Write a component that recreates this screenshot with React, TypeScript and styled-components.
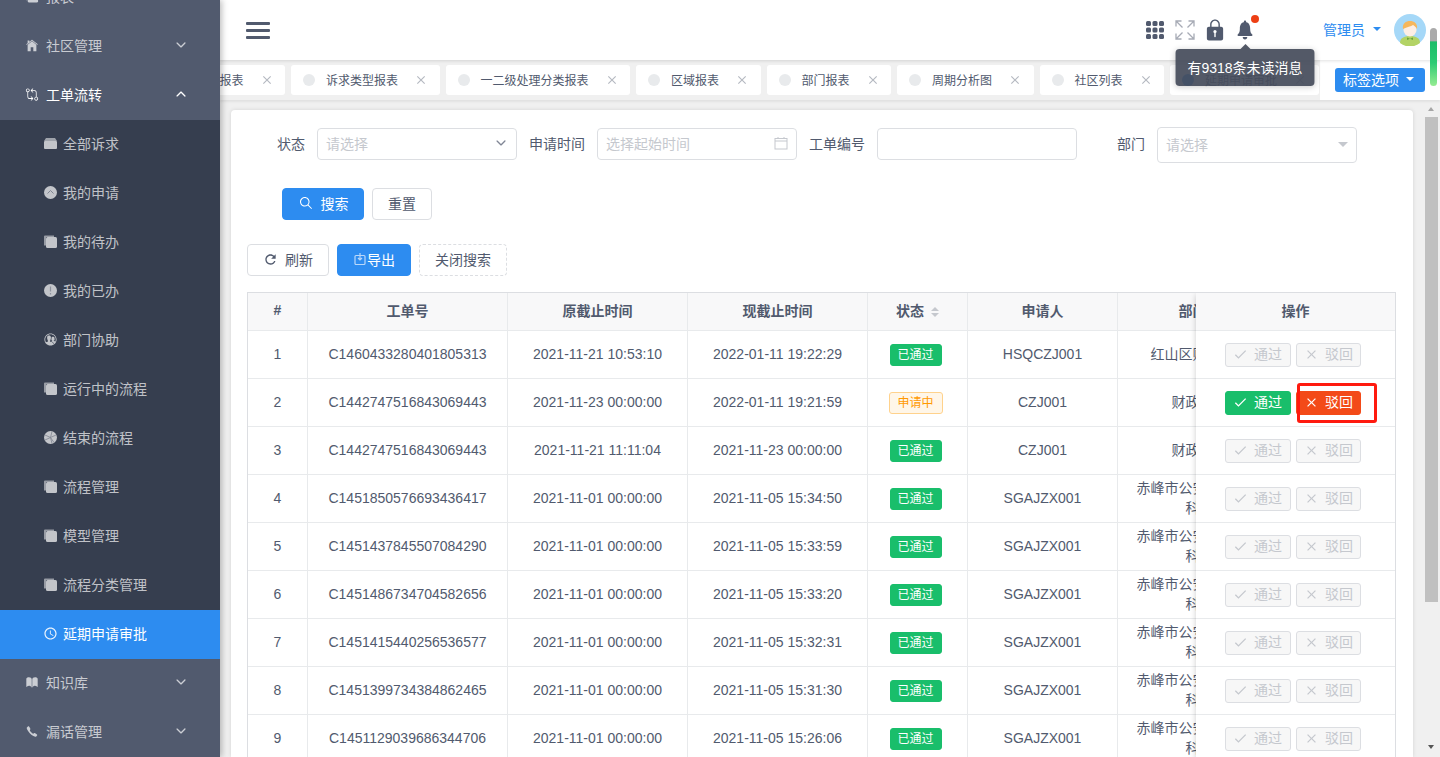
import React from 'react';
import styled, { createGlobalStyle } from 'styled-components';
import {
  IoIosArrowDown,
  IoIosArrowUp,
  IoIosBook,
  IoIosCall,
  IoIosContacts,
  IoIosGitCompare,
  IoIosHome,
  IoIosLock,
  IoIosNotifications,
  IoIosSearch,
  IoMdCheckmark,
  IoMdClose,
  IoMdRefresh,
  IoMdTime,
} from 'react-icons/io';

const GlobalStyle = createGlobalStyle`
  html, body {
    margin: 0;
    height: 100%;
    overflow: hidden;
  }
  body {
    font-family: "Liberation Sans", "Noto Sans CJK SC", sans-serif;
    font-size: 14px;
    color: #515a6e;
  }
  * {
    box-sizing: border-box;
  }
`;

const Shell = styled.div`
  display: flex;
  width: 100%;
  height: 100vh;
  overflow: hidden;
  position: relative;
`;

const Sidebar = styled.aside`
  flex: 0 0 220px;
  height: 100%;
  overflow: hidden;
  background: #515a6e;
  box-shadow: 2px 0 6px rgba(0, 0, 0, 0.25);
  position: relative;
  z-index: 3;
`;

// menu is scrolled a little, the first row sits above the window
const Menu = styled.div`
  margin-top: -27px;
`;

const MenuRow = styled.div<{ $open?: boolean }>`
  display: flex;
  align-items: center;
  height: 49px;
  padding: 0 32px 3px 25px;
  color: ${(p) => (p.$open ? '#fff' : 'rgba(255, 255, 255, 0.7)')};

  svg:first-child {
    flex: 0 0 14px;
    margin-right: 7px;
    font-size: 15px;
  }
  span {
    flex: 1;
  }
`;

const SubMenu = styled.div`
  background: #363e4f;
`;

const SubRow = styled.div<{ $active?: boolean }>`
  display: flex;
  align-items: center;
  height: 49px;
  padding: 0 0 3px 43px;
  color: ${(p) => (p.$active ? '#fff' : 'rgba(255, 255, 255, 0.7)')};
  background: ${(p) => (p.$active ? '#2d8cf0' : 'transparent')};

  svg {
    flex: 0 0 15px;
    margin-right: 5px;
    font-size: 15px;
  }
`;

const Main = styled.div`
  flex: 1;
  min-width: 0;
  display: flex;
  flex-direction: column;
  background: #f0f0f0;
`;

const Header = styled.header`
  flex: 0 0 60px;
  display: flex;
  align-items: center;
  justify-content: space-between;
  padding: 0 14px 0 26px;
  background: #fff;
  box-shadow: 0 1px 3px rgba(0, 0, 0, 0.12);
  position: relative;
  z-index: 2;
`;

const Hamburger = styled.div`
  display: flex;
  flex-direction: column;
  gap: 4px;
  width: 24px;

  i {
    display: block;
    height: 3px;
    border-radius: 1px;
    background: #515a6e;
  }
`;

const HeaderRight = styled.div`
  display: flex;
  align-items: center;
`;

const IconSlot = styled.div<{ $size?: number }>`
  position: relative;
  display: flex;
  align-items: center;
  justify-content: center;
  width: 30px;
  height: 30px;
  color: #515a6e;
  font-size: ${(p) => p.$size || 24}px;
`;

const RedDot = styled.i`
  position: absolute;
  top: 0;
  right: 1px;
  width: 8px;
  height: 8px;
  border-radius: 50%;
  background: #ed3f14;
`;

const Tooltip = styled.div`
  position: absolute;
  top: 34px;
  left: 50%;
  transform: translateX(-50%);
  width: 139px;
  height: 37px;
  display: flex;
  align-items: center;
  justify-content: center;
  padding-bottom: 1px;
  border-radius: 4px;
  background: rgba(70, 76, 91, 0.93);
  color: #fff;
  font-size: 14px;
  white-space: nowrap;
  box-shadow: 0 1px 6px rgba(0, 0, 0, 0.2);

  &::before {
    content: '';
    position: absolute;
    top: -5px;
    left: 50%;
    margin-left: -5px;
    border-style: solid;
    border-width: 0 5px 5px;
    border-color: transparent transparent rgba(70, 76, 91, 0.93);
  }
`;

const UserName = styled.div`
  display: flex;
  align-items: center;
  gap: 8px;
  margin-left: 63px;
  padding-bottom: 2px;
  color: #2d8cf0;
`;

const Caret = styled.i<{ $color: string; $size?: number }>`
  display: inline-block;
  border-style: solid;
  border-width: ${(p) => p.$size || 4}px ${(p) => p.$size || 4}px 0;
  border-color: ${(p) => p.$color} transparent transparent;
`;

const AvatarWrap = styled.div`
  margin-left: 13px;
  width: 32px;
  height: 32px;
  svg {
    display: block;
  }
`;

const ScrollBadge = styled.div`
  position: absolute;
  top: 28px;
  right: 3px;
  width: 7px;
  height: 58px;
  border-radius: 4px;
  background: linear-gradient(#aaa 0, #aaa 22%, #1dbd69 24%, #2ccb74 60%, #96ec92 100%);
  z-index: 4;
`;

const TabBar = styled.div`
  flex: 0 0 40px;
  display: flex;
  box-shadow: 0 2px 2px rgba(0, 0, 0, 0.06);
  position: relative;
  z-index: 1;
`;

const TabScroller = styled.div`
  flex: 1;
  min-width: 0;
  overflow: hidden;
  padding-top: 5px;
`;

// scrolled sideways, so the first tab is cut by the sidebar
const TabList = styled.div`
  display: flex;
  gap: 6px;
  margin-left: -59.5px;
  width: max-content;
`;

const Tab = styled.div`
  display: flex;
  align-items: center;
  height: 30px;
  padding: 0 11.5px 1px 12px;
  background: #fff;
  border-radius: 3px;
  font-size: 12px;
  white-space: nowrap;

  svg {
    margin-left: 16px;
    font-size: 14px;
    color: #b5b9c1;
  }
`;

const TabDot = styled.i<{ $active?: boolean }>`
  width: 12px;
  height: 12px;
  margin-right: 11px;
  border-radius: 50%;
  background: ${(p) => (p.$active ? '#2d8cf0' : '#e8eaec')};
`;

const TabOptions = styled.div`
  flex: 0 0 120px;
  display: flex;
  align-items: center;
  padding-left: 15px;
  background: #fff;
`;

const OptionsButton = styled.div`
  display: flex;
  align-items: center;
  gap: 7px;
  width: 90px;
  height: 24px;
  padding: 0 0 2px 8px;
  border-radius: 3px;
  background: #2d8cf0;
  color: #fff;
`;

const Body = styled.div`
  flex: 1;
  min-height: 0;
  display: flex;
  padding-left: 11px;
`;

const Card = styled.main`
  flex: 1;
  min-width: 0;
  margin: 10px 12px 0 0;
  padding: 17px 17px 0 16px;
  background: #fff;
  border-radius: 4px 4px 0 0;
  box-shadow: 0 0 4px rgba(0, 0, 0, 0.12);
  overflow: hidden;
`;

const ScrollTrack = styled.div`
  flex: 0 0 15px;
  display: flex;
  flex-direction: column;
  align-items: flex-start;
  background: #f0f0f0;
`;

const ScrollArrow = styled.i<{ $down?: boolean }>`
  width: 0;
  height: 0;
  margin: ${(p) => (p.$down ? '143px' : '7px')} 0 0 3px;
  border-style: solid;
  border-width: ${(p) => (p.$down ? '4px 3.5px 0' : '0 3.5px 4px')};
  border-color: ${(p) =>
    p.$down ? '#555 transparent transparent' : 'transparent transparent #a6a6a6'};
`;

const ScrollThumb = styled.div`
  width: 13px;
  height: 485px;
  margin-top: 6px;
  background: #c0c0c0;
`;

const FormRow = styled.div`
  display: grid;
  grid-template-columns: repeat(4, 280px);
`;

const Field = styled.div`
  display: flex;
  align-items: flex-start;
`;

const FieldLabel = styled.label`
  flex: 0 0 58px;
  height: 36px;
  line-height: 34px;
  margin-right: 12px;
  text-align: right;
  white-space: nowrap;
`;

const Control = styled.div<{ $tall?: boolean }>`
  display: flex;
  align-items: center;
  justify-content: space-between;
  width: 200px;
  height: ${(p) => (p.$tall ? 36 : 32)}px;
  margin-top: ${(p) => (p.$tall ? 0 : 1)}px;
  padding: 0 8px 2px 8px;
  border: 1px solid #dcdee2;
  border-radius: 4px;
  color: #c5c8ce;
  background: #fff;
`;

const SearchRow = styled.div`
  display: flex;
  gap: 8px;
  margin: 25px 0 0 35px;
`;

const Button = styled.button<{ $kind?: 'primary' | 'dashed'; $width: number }>`
  display: inline-flex;
  align-items: center;
  justify-content: center;
  width: ${(p) => p.$width}px;
  height: 32px;
  padding: 0 0 2px;
  border-radius: 4px;
  border: 1px ${(p) => (p.$kind === 'dashed' ? 'dashed' : 'solid')}
    ${(p) => (p.$kind === 'primary' ? '#2d8cf0' : '#dcdee2')};
  background: ${(p) => (p.$kind === 'primary' ? '#2d8cf0' : '#fff')};
  color: ${(p) => (p.$kind === 'primary' ? '#fff' : '#515a6e')};
  font: inherit;
`;

const BtnIcon = styled.span<{ $gap: number }>`
  display: inline-flex;
  margin-right: ${(p) => p.$gap}px;
  font-size: 14px;
`;

const Toolbar = styled.div`
  display: flex;
  gap: 8px;
  margin-top: 24px;
`;

const TableWrap = styled.div`
  position: relative;
  margin-top: 16px;
  border: 1px solid #dcdee2;
  border-width: 1px 1px 0;
  overflow: hidden;
`;

const Table = styled.table`
  width: 100%;
  table-layout: fixed;
  border-collapse: separate;
  border-spacing: 0;
`;

const Th = styled.th`
  height: 38px;
  padding: 0 0 3px;
  background: #f8f8f9;
  border-right: 1px solid #e8eaec;
  border-bottom: 1px solid #e8eaec;
  font-weight: 700;
  color: #515a6e;
  text-align: center;
`;

const Td = styled.td`
  height: 48px;
  padding: 0 14px 2px;
  border-right: 1px solid #e8eaec;
  border-bottom: 1px solid #e8eaec;
  line-height: 20px;
  text-align: center;
  word-break: break-all;
`;

const FixedColumn = styled.div`
  position: absolute;
  top: 0;
  right: 0;
  width: 199px;
  background: #fff;
  box-shadow: -2px 0 6px -2px rgba(0, 0, 0, 0.2);
`;

const FixedHead = styled.div`
  display: flex;
  align-items: center;
  justify-content: center;
  height: 38px;
  padding-bottom: 3px;
  background: #f8f8f9;
  border-bottom: 1px solid #e8eaec;
  font-weight: 700;
`;

const ActionRow = styled.div`
  position: relative;
  display: flex;
  align-items: center;
  justify-content: center;
  gap: 5px;
  height: 48px;
  padding-right: 5px;
  border-bottom: 1px solid #e8eaec;
`;

const ActionButton = styled.button<{ $tone: 'pass' | 'reject' | 'off'; $width: number }>`
  display: inline-flex;
  align-items: center;
  width: ${(p) => p.$width}px;
  height: 24px;
  padding: 0 0 4px 7px;
  border-radius: 3px;
  border: 1px solid
    ${(p) => (p.$tone === 'pass' ? '#19be6b' : p.$tone === 'reject' ? '#f34a18' : '#dcdee2')};
  background: ${(p) =>
    p.$tone === 'pass' ? '#19be6b' : p.$tone === 'reject' ? '#f34a18' : '#f7f7f7'};
  color: ${(p) => (p.$tone === 'off' ? '#c5c8ce' : '#fff')};
  font: inherit;

  svg {
    flex: 0 0 15px;
    margin: 4px 6px 0 0;
    font-size: 15px;
  }
`;

const Highlight = styled.div`
  position: absolute;
  top: 4px;
  left: 101px;
  width: 80px;
  height: 40px;
  border: 3px solid #ff1a0f;
  border-radius: 3px;
`;

const StatusTag = styled.span<{ $pending?: boolean }>`
  display: inline-block;
  width: ${(p) => (p.$pending ? 54 : 52)}px;
  height: 22px;
  margin: 2px 4px 0 0;
  line-height: 20px;
  border-radius: 3px;
  border: 1px solid ${(p) => (p.$pending ? '#ffd28c' : '#19be6b')};
  background: ${(p) => (p.$pending ? '#fff6e8' : '#19be6b')};
  color: ${(p) => (p.$pending ? '#ff9900' : '#fff')};
  font-size: 12px;
  vertical-align: middle;
`;

const SortMark = styled.span`
  display: inline-flex;
  flex-direction: column;
  gap: 2px;
  margin-left: 7px;
  vertical-align: middle;

  i {
    border-style: solid;
    border-color: transparent;
    border-width: 0 4.5px;
  }
  i:first-child {
    border-bottom: 4px solid #c5c8ce;
  }
  i:last-child {
    border-top: 4px solid #c5c8ce;
  }
`;

const FilingIcon = () => (
  <svg viewBox="0 0 15 15" width="15" height="15" fill="currentColor">
    <path d="M3 2h9l2 3H1z" opacity="0.75" />
    <rect x="1" y="5" width="13" height="8" rx="1" />
  </svg>
);

const BrowsersIcon = () => (
  <svg viewBox="0 0 15 15" width="15" height="15" fill="currentColor">
    <path d="M1 2.500a1 1 0 0 1 1-1h9v1.500H3v8.500H1z" opacity="0.7" />
    <rect x="3" y="3" width="11" height="11" rx="1.500" />
  </svg>
);

const DropupIcon = () => (
  <svg viewBox="0 0 15 15" width="15" height="15">
    <circle cx="7.500" cy="7.500" r="6.500" fill="currentColor" />
    <path d="M4.500 8.500l3-3 3 3" fill="none" stroke="#7f8491" strokeWidth="1" />
  </svg>
);

const AlertIcon = () => (
  <svg viewBox="0 0 15 15" width="15" height="15">
    <circle cx="7.500" cy="7.500" r="6.500" fill="currentColor" />
    <path d="M7.500 3.500v5M7.500 10v1.500" fill="none" stroke="#8e929d" strokeWidth="1.200" />
  </svg>
);

const ApertureIcon = () => (
  <svg viewBox="0 0 15 15" width="15" height="15">
    <circle cx="7.500" cy="7.500" r="6.500" fill="currentColor" />
    <path
      d="M9 1.500L7.500 7.500 2 5M13 5L7.500 7.500 9 13.500M2 10l5.500-2.500 3.500 5"
      fill="none"
      stroke="#7f8491"
      strokeWidth="0.800"
    />
  </svg>
);

const AppsIcon = () => (
  <svg width="18" height="18" viewBox="0 0 18 18" fill="currentColor">
    {[0, 6.5, 13].map((y) =>
      [0, 6.5, 13].map((x) => (
        <rect key={`${x}-${y}`} x={x} y={y} width="5" height="5" rx="1.500" />
      )),
    )}
  </svg>
);

const subItems = [
  { label: '全部诉求', icon: <FilingIcon /> },
  { label: '我的申请', icon: <DropupIcon /> },
  { label: '我的待办', icon: <BrowsersIcon /> },
  { label: '我的已办', icon: <AlertIcon /> },
  { label: '部门协助', icon: <IoIosContacts /> },
  { label: '运行中的流程', icon: <BrowsersIcon /> },
  { label: '结束的流程', icon: <ApertureIcon /> },
  { label: '流程管理', icon: <BrowsersIcon /> },
  { label: '模型管理', icon: <BrowsersIcon /> },
  { label: '流程分类管理', icon: <BrowsersIcon /> },
];

const tabs = [
  '诉求报表',
  '诉求类型报表',
  '一二级处理分类报表',
  '区域报表',
  '部门报表',
  '周期分析图',
  '社区列表',
  '延期申请审批',
];

const dept = '赤峰市公安局指挥科';

const rows = [
  ['C1460433280401805313', '2021-11-21 10:53:10', '2022-01-11 19:22:29', '已通过', 'HSQCZJ001', '红山区财政局'],
  ['C1442747516843069443', '2021-11-23 00:00:00', '2022-01-11 19:21:59', '申请中', 'CZJ001', '财政局'],
  ['C1442747516843069443', '2021-11-21 11:11:04', '2021-11-23 00:00:00', '已通过', 'CZJ001', '财政局'],
  ['C1451850576693436417', '2021-11-01 00:00:00', '2021-11-05 15:34:50', '已通过', 'SGAJZX001', dept],
  ['C1451437845507084290', '2021-11-01 00:00:00', '2021-11-05 15:33:59', '已通过', 'SGAJZX001', dept],
  ['C1451486734704582656', '2021-11-01 00:00:00', '2021-11-05 15:33:20', '已通过', 'SGAJZX001', dept],
  ['C1451415440256536577', '2021-11-01 00:00:00', '2021-11-05 15:32:31', '已通过', 'SGAJZX001', dept],
  ['C1451399734384862465', '2021-11-01 00:00:00', '2021-11-05 15:31:30', '已通过', 'SGAJZX001', dept],
  ['C1451129039686344706', '2021-11-01 00:00:00', '2021-11-05 15:26:06', '已通过', 'SGAJZX001', dept],
];

const Avatar = () => (
  <svg width="32" height="32" viewBox="0 0 32 32">
    <circle cx="16" cy="16" r="16" fill="#a5d8f8" />
    <path d="M6 29c0-5 4-7 10-7s10 2 10 7a16 16 0 0 1-20 0z" fill="#b3d365" />
    <circle cx="16" cy="16" r="6.500" fill="#fdeee4" />
    <path d="M9 15c-1-5.500 3-8 7-8s8 2.500 7 8c-1-2-3-3.500-4-4-2 1.500-6 2-10 4z" fill="#f6b75c" />
    <path d="M13 23.500l3 1.200 3-1.200v2.500l-3-1.200-3 1.200z" fill="#6da33a" />
  </svg>
);

const ExpandIcon = () => (
  <svg width="20" height="20" viewBox="0 0 20 20" fill="none" stroke="#a7abb5" strokeWidth="1.300">
    <path d="M1 6.500V1h5.500M1 1l6.500 6.500" />
    <path d="M13.500 1H19v5.500M19 1l-6.500 6.500" />
    <path d="M1 13.500V19h5.500M1 19l6.500-6.500" />
    <path d="M13.500 19H19v-5.500M19 19l-6.500-6.500" />
  </svg>
);

const ExportIcon = () => (
  <svg width="14" height="14" viewBox="0 0 14 14" fill="none" stroke="#b9d8fa" strokeWidth="1.200">
    <rect x="2" y="3.500" width="10" height="9" rx="1" />
    <path d="M7 1v7M5 6l2 2 2-2" />
  </svg>
);

const CalendarIcon = () => (
  <svg width="14" height="14" viewBox="0 0 14 14" fill="none" stroke="#c5c8ce" strokeWidth="1">
    <rect x="1" y="2.500" width="12" height="10.500" />
    <path d="M1 5h12M4 1v2M10 1v2" />
  </svg>
);

const App: React.FC = () => (
  <Shell>
    <GlobalStyle />
    <Sidebar>
      <Menu>
        <MenuRow>
          <BrowsersIcon />
          <span>报表</span>
          <IoIosArrowDown />
        </MenuRow>
        <MenuRow>
          <IoIosHome />
          <span>社区管理</span>
          <IoIosArrowDown />
        </MenuRow>
        <MenuRow $open>
          <IoIosGitCompare />
          <span>工单流转</span>
          <IoIosArrowUp />
        </MenuRow>
        <SubMenu>
          {subItems.map((item) => (
            <SubRow key={item.label}>
              {item.icon}
              {item.label}
            </SubRow>
          ))}
          <SubRow $active>
            <IoMdTime />
            延期申请审批
          </SubRow>
        </SubMenu>
        <MenuRow>
          <IoIosBook />
          <span>知识库</span>
          <IoIosArrowDown />
        </MenuRow>
        <MenuRow>
          <IoIosCall />
          <span>漏话管理</span>
          <IoIosArrowDown />
        </MenuRow>
      </Menu>
    </Sidebar>

    <Main>
      <Header>
        <Hamburger>
          <i />
          <i />
          <i />
        </Hamburger>
        <HeaderRight>
          <IconSlot>
            <AppsIcon />
          </IconSlot>
          <IconSlot>
            <ExpandIcon />
          </IconSlot>
          <IconSlot $size={26}>
            <IoIosLock />
          </IconSlot>
          <IconSlot $size={24}>
            <IoIosNotifications />
            <RedDot />
            <Tooltip>有9318条未读消息</Tooltip>
          </IconSlot>
          <UserName>
            管理员
            <Caret $color="#2d8cf0" />
          </UserName>
          <AvatarWrap>
            <Avatar />
          </AvatarWrap>
        </HeaderRight>
      </Header>

      <TabBar>
        <TabScroller>
          <TabList>
            {tabs.map((name, i) => (
              <Tab key={name}>
                <TabDot $active={i === tabs.length - 1} />
                {name}
                <IoMdClose />
              </Tab>
            ))}
          </TabList>
        </TabScroller>
        <TabOptions>
          <OptionsButton>
            标签选项
            <Caret $color="#fff" />
          </OptionsButton>
        </TabOptions>
      </TabBar>

      <Body>
        <Card>
          <FormRow>
            <Field>
              <FieldLabel>状态</FieldLabel>
              <Control>
                请选择
                <IoIosArrowDown color="#808695" size={14} />
              </Control>
            </Field>
            <Field>
              <FieldLabel>申请时间</FieldLabel>
              <Control>
                选择起始时间
                <CalendarIcon />
              </Control>
            </Field>
            <Field>
              <FieldLabel>工单编号</FieldLabel>
              <Control />
            </Field>
            <Field>
              <FieldLabel>部门</FieldLabel>
              <Control $tall>
                请选择
                <Caret $color="#c5c8ce" $size={5} />
              </Control>
            </Field>
          </FormRow>

          <SearchRow>
            <Button $kind="primary" $width={82}>
              <BtnIcon $gap={7}>
                <IoIosSearch size={16} />
              </BtnIcon>
              搜索
            </Button>
            <Button $width={60}>重置</Button>
          </SearchRow>

          <Toolbar>
            <Button $width={82}>
              <BtnIcon $gap={7}>
                <IoMdRefresh size={15} />
              </BtnIcon>
              刷新
            </Button>
            <Button $kind="primary" $width={74}>
              <BtnIcon $gap={0}>
                <ExportIcon />
              </BtnIcon>
              导出
            </Button>
            <Button $kind="dashed" $width={88}>
              关闭搜索
            </Button>
          </Toolbar>

          <TableWrap>
            <Table>
              <colgroup>
                <col width="60" />
                <col width="200" />
                <col width="180" />
                <col width="180" />
                <col width="100" />
                <col width="150" />
                <col width="150" />
                <col />
              </colgroup>
              <thead>
                <tr>
                  <Th>#</Th>
                  <Th>工单号</Th>
                  <Th>原截止时间</Th>
                  <Th>现截止时间</Th>
                  <Th>
                    状态
                    <SortMark>
                      <i />
                      <i />
                    </SortMark>
                  </Th>
                  <Th>申请人</Th>
                  <Th>部门</Th>
                  <Th />
                </tr>
              </thead>
              <tbody>
                {rows.map((row, i) => (
                  <tr key={i}>
                    <Td>{i + 1}</Td>
                    <Td>{row[0]}</Td>
                    <Td>{row[1]}</Td>
                    <Td>{row[2]}</Td>
                    <Td>
                      <StatusTag $pending={row[3] === '申请中'}>{row[3]}</StatusTag>
                    </Td>
                    <Td>{row[4]}</Td>
                    <Td>{row[5]}</Td>
                    <Td />
                  </tr>
                ))}
              </tbody>
            </Table>
            <FixedColumn>
              <FixedHead>操作</FixedHead>
              {rows.map((row, i) => {
                const pending = row[3] === '申请中';
                return (
                  <ActionRow key={i}>
                    <ActionButton $tone={pending ? 'pass' : 'off'} $width={66}>
                      <IoMdCheckmark />
                      通过
                    </ActionButton>
                    <ActionButton $tone={pending ? 'reject' : 'off'} $width={65}>
                      <IoMdClose />
                      驳回
                    </ActionButton>
                    {pending && <Highlight />}
                  </ActionRow>
                );
              })}
            </FixedColumn>
          </TableWrap>
        </Card>
        <ScrollTrack>
          <ScrollArrow />
          <ScrollThumb />
          <ScrollArrow $down />
        </ScrollTrack>
      </Body>
    </Main>
    <ScrollBadge />
  </Shell>
);

export default App;
